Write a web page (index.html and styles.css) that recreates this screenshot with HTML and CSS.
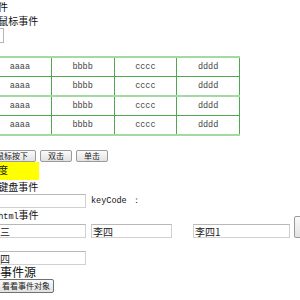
FILE: index.html
```html
<!DOCTYPE html>
<html lang="zh">
<head>
  <meta charset="UTF-8">
  <title>事件</title>
  <link rel="stylesheet" href="styles.css">
</head>
<body>
  <div class="page">
    <div class="line">事件</div>
    <div class="line"><span class="en">1.</span>鼠标事件</div>
    <div class="box"></div>

    <table class="grid">
      <tr class="split"><td>aaaa</td><td>bbbb</td><td>cccc</td><td>dddd</td></tr>
      <tr><td>aaaa</td><td>bbbb</td><td>cccc</td><td>dddd</td></tr>
      <tr class="split"><td>aaaa</td><td>bbbb</td><td>cccc</td><td>dddd</td></tr>
      <tr class="last"><td>aaaa</td><td>bbbb</td><td>cccc</td><td>dddd</td></tr>
    </table>

    <div class="btns">
      <button class="btn">鼠标按下</button>
      <button class="btn">双击</button>
      <button class="btn">单击</button>
    </div>
    <div class="hot">温度</div>

    <div class="line"><span class="en">2.</span>键盘事件</div>
    <div class="key-row">
      <input class="field f1" type="text">
      <span class="en">keyCode ：</span>
    </div>

    <div class="line"><span class="en">3.html</span>事件</div>
    <div class="name-row">
      <input class="field f1" type="text" value="张三">
      <input class="field f2" type="text" value="李四">
      <input class="field f3" type="text" value="李四1">
      <button class="btn side"></button>
    </div>
    <input class="field f1 lone" type="text" value="李四">

    <div class="line big">事件源</div>
    <button class="btn show">看看事件对象</button>
  </div>
</body>
</html>
```

FILE: styles.css
```css
body {
  margin: 0;
  overflow: hidden;
  background: #fff;
  color: #111;
  font-family: "Noto Sans CJK SC", sans-serif;
  font-size: 10px;
}

.page {
  margin-left: -12px;
  width: 330px;
}

.en {
  font-family: "Liberation Mono", monospace;
  font-size: 8.5px;
}

.line {
  height: 14px;
  line-height: 14px;
  white-space: nowrap;
}

.line.big {
  height: 14px;
  font-size: 12px;
  padding-left: 12px;
}

.box {
  width: 16px;
  height: 15px;
  box-sizing: border-box;
  border: 1px solid #b5b5b5;
  margin-bottom: 13px;
}

.grid {
  width: 252px;
  border-collapse: collapse;
  font-family: "Liberation Mono", monospace;
  font-size: 8.5px;
  color: #444;
}

.grid td {
  height: 18px;
  padding: 0;
  text-align: center;
  border: 1px solid #4caa4c;
}

.grid tr.split td {
  border-top: 2px solid #a6d8a6;
}

.grid tr.last td {
  border-bottom: 2px solid #a6d8a6;
}

.btns {
  display: flex;
  gap: 4px;
  margin-top: 14px;
}

.btn {
  height: 12px;
  padding: 0 7px;
  border: 1px solid #9a9a9a;
  border-radius: 2px;
  background: linear-gradient(#fafafa, #e2e2e2);
  font-family: "Noto Sans CJK SC", sans-serif;
  font-size: 8px;
  line-height: 10px;
  color: #222;
}

.hot {
  width: 51px;
  height: 18px;
  line-height: 16px;
  background: #ffff00;
}

.key-row {
  display: flex;
  align-items: center;
  gap: 5px;
  height: 14px;
  white-space: nowrap;
}

.field {
  height: 14px;
  box-sizing: border-box;
  padding: 0 1px;
  border: 1px solid #d0d0d0;
  border-top-color: #b8b8b8;
  font-family: "Noto Sans CJK SC", sans-serif;
  font-size: 10px;
  color: #222;
}

.f1 { width: 98px; margin-right: 5px; }
.f2 { width: 81px; margin-right: 21px; }
.f3 { width: 97px; margin-right: 4px; }

.key-row .f1 { margin-right: 0; }

.name-row {
  display: flex;
  align-items: flex-end;
  height: 16px;
}

.btn.side {
  width: 20px;
  height: 22px;
}

.lone {
  display: block;
  margin-top: 13px;
}

.btn.show {
  display: block;
  height: 14px;
  margin-left: 10px;
  padding: 0 3px;
  border-color: #707070;
  font-size: 8px;
}
```
